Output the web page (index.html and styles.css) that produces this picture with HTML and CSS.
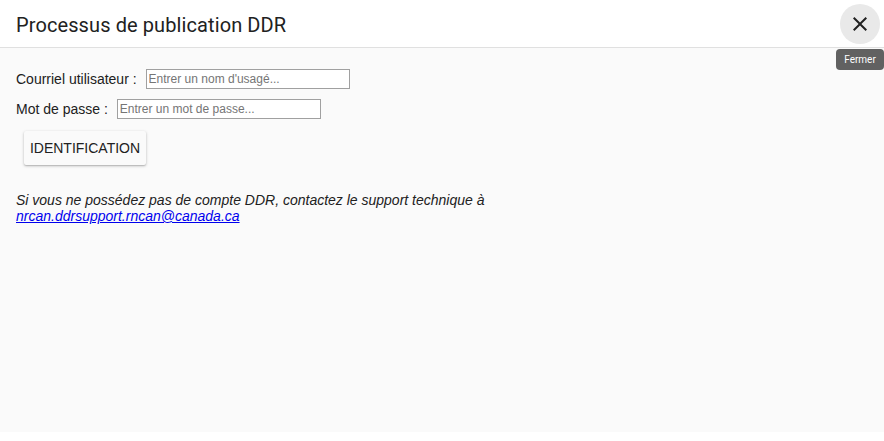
FILE: index.html
```html
<!DOCTYPE html>
<html lang="fr">
<head>
<meta charset="utf-8">
<title>Processus de publication DDR</title>
<link rel="stylesheet" href="styles.css">
</head>
<body>
<div class="dialog">
  <header class="header">
    <h1 class="title">Processus de publication DDR</h1>
    <button class="close" aria-label="Fermer">
      <svg width="24" height="24" viewBox="0 0 24 24"><path d="M19 6.41L17.59 5 12 10.59 6.41 5 5 6.41 10.59 12 5 17.59 6.41 19 12 13.41 17.59 19 19 17.59 13.41 12z" fill="#212121"/></svg>
    </button>
    <div class="tooltip">Fermer</div>
  </header>
  <main class="content">
    <div class="row">
      <label class="label" for="user">Courriel utilisateur :</label>
      <input class="input" id="user" type="text" placeholder="Entrer un nom d'usagé...">
    </div>
    <div class="row">
      <label class="label" for="pass">Mot de passe :</label>
      <input class="input" id="pass" type="password" placeholder="Entrer un mot de passe...">
    </div>
    <button class="login">IDENTIFICATION</button>
    <p class="note">Si vous ne possédez pas de compte DDR, contactez le support technique à<br><a href="#">nrcan.ddrsupport.rncan@canada.ca</a></p>
  </main>
</div>
</body>
</html>
```
FILE: styles.css
```css
html, body {
  margin: 0;
  padding: 0;
  background: #ffffff;
}
body {
  font-family: "Liberation Sans", Arial, sans-serif;
  color: #212121;
}
.dialog {
  width: 884px;
  height: 432px;
  display: flex;
  flex-direction: column;
  background: #fafafa;
}
.header {
  position: relative;
  height: 47px;
  flex: none;
  background: #ffffff;
  border-bottom: 1px solid #e0e0e0;
  display: flex;
  align-items: center;
  justify-content: space-between;
  padding: 0 4px 0 16px;
}
.title {
  margin: 0;
  font-family: Roboto, "Liberation Sans", sans-serif;
  font-size: 20px;
  font-weight: 400;
  color: #212121;
  letter-spacing: 0.1px;
  position: relative;
  top: 1px;
}
.close {
  width: 40px;
  height: 40px;
  border-radius: 50%;
  border: none;
  background: #e9e9e9;
  padding: 0;
  display: flex;
  align-items: center;
  justify-content: center;
  cursor: pointer;
}
.tooltip {
  position: absolute;
  top: 49px;
  right: 0;
  width: 48px;
  height: 21px;
  box-sizing: border-box;
  background: #616161;
  color: #ffffff;
  border-radius: 4px;
  font-family: Roboto, "Liberation Sans", sans-serif;
  font-size: 10px;
  line-height: 21px;
  text-align: center;
  z-index: 2;
}
.content {
  padding: 21px 16px 0 16px;
  font-size: 14px;
}
.row {
  display: flex;
  align-items: center;
  gap: 9px;
  height: 20px;
  margin-bottom: 10px;
}
.label {
  color: #212121;
}
.input {
  width: 204px;
  height: 20px;
  box-sizing: border-box;
  border: 1px solid #a0a0a0;
  background: #ffffff;
  font-family: "Liberation Sans", Arial, sans-serif;
  font-size: 12px;
  padding: 0 2px;
  margin: 0;
}
.input::placeholder {
  color: #757575;
}
.login {
  margin: 2px 0 0 8px;
  height: 34px;
  width: 122px;
  border: none;
  border-radius: 2px;
  background: #fafafa;
  box-shadow: 0 1px 3px rgba(0,0,0,0.25), 0 1px 1px rgba(0,0,0,0.1);
  font-family: "Liberation Sans", Arial, sans-serif;
  font-size: 14px;
  color: #212121;
  padding: 0;
}
.note {
  margin: 27px 0 0 0;
  font-style: italic;
  line-height: 16px;
  color: #212121;
}
.note a {
  color: #0000ee;
}
```
